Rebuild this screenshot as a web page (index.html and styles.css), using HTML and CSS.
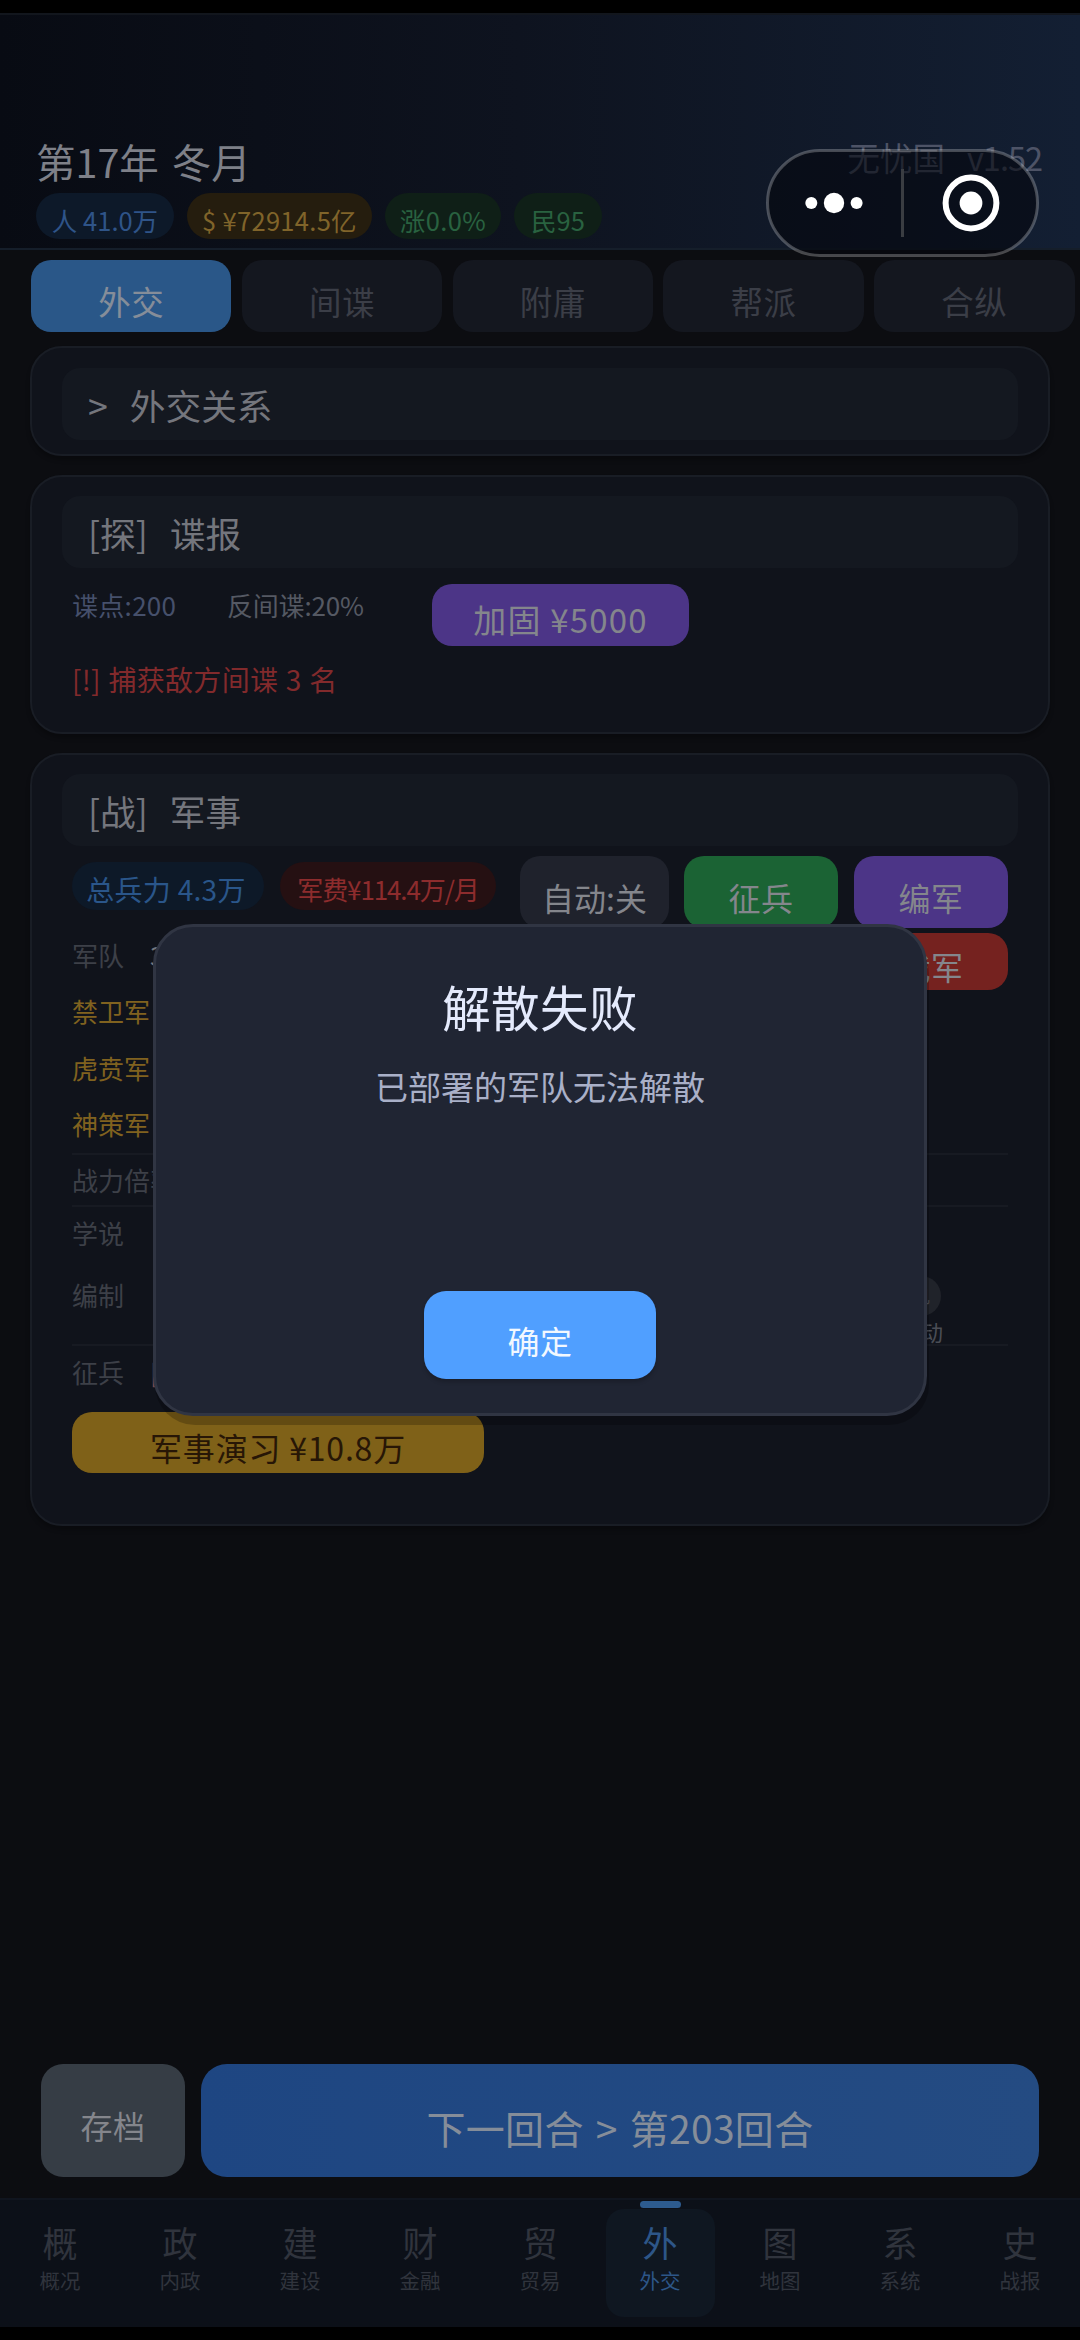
FILE: index.html
```
<!DOCTYPE html>
<html lang="zh-CN">
<head>
<meta charset="utf-8">
<title>无忧国</title>
<link rel="stylesheet" href="styles.css">
</head>
<body>
<div class="app">
  <header class="header">
    <div class="header-row">
      <h1 class="date">第17年 冬月</h1>
      <div class="version"><span>无忧国</span><span class="version-no">v1.52</span></div>
    </div>
    <div class="stats">
      <span class="pill pill-pop">人 41.0万</span>
      <span class="pill pill-gold">$ ¥72914.5亿</span>
      <span class="pill pill-rise">涨0.0%</span>
      <span class="pill pill-mood">民95</span>
    </div>
  </header>

  <nav class="tabs">
    <a class="tab active">外交</a>
    <a class="tab">间谍</a>
    <a class="tab">附庸</a>
    <a class="tab">帮派</a>
    <a class="tab">合纵</a>
  </nav>

  <main class="content">
    <section class="card card-relations">
      <h2 class="card-title"><span>&gt;</span><span>外交关系</span></h2>
    </section>

    <section class="card card-spy">
      <h2 class="card-title"><span>[探]</span><span>谍报</span></h2>
      <div class="spy-row">
        <span class="spy-points">谍点:200</span>
        <span class="spy-counter">反间谍:20%</span>
        <button class="btn btn-purple btn-fortify">加固 ¥5000</button>
      </div>
      <p class="alert">[!] 捕获敌方间谍 3 名</p>
    </section>

    <section class="card card-army">
      <h2 class="card-title"><span>[战]</span><span>军事</span></h2>
      <div class="army-actions">
        <span class="pill pill-force">总兵力 4.3万</span>
        <span class="pill pill-cost">军费¥114.4万/月</span>
        <button class="btn btn-grey btn-auto">自动:关</button>
        <button class="btn btn-green">征兵</button>
        <button class="btn btn-purple">编军</button>
      </div>
      <div class="army-count">
        <span class="label">军队</span><span class="value">3</span>
        <button class="btn btn-red btn-cut">裁军</button>
      </div>
      <div class="troops">
        <div class="troop">禁卫军</div>
        <div class="troop">虎贲军</div>
        <div class="troop">神策军</div>
      </div>
      <div class="line line-power"><span class="label">战力倍率</span></div>
      <div class="line line-doctrine"><span class="label">学说</span></div>
      <div class="formation">
        <span class="label">编制</span>
        <div class="unit"><span class="unit-icon">机</span><span class="unit-name">机动</span></div>
      </div>
      <div class="line line-draft"><span class="label">征兵</span><span class="value warn">[!]</span></div>
      <button class="btn btn-gold">军事演习 ¥10.8万</button>
    </section>
  </main>

  <div class="actions">
    <button class="btn btn-save">存档</button>
    <button class="btn btn-next">下一回合 &gt; 第203回合</button>
  </div>

  <nav class="bottom-nav">
    <a class="nav-item"><b>概</b><i>概况</i></a>
    <a class="nav-item"><b>政</b><i>内政</i></a>
    <a class="nav-item"><b>建</b><i>建设</i></a>
    <a class="nav-item"><b>财</b><i>金融</i></a>
    <a class="nav-item"><b>贸</b><i>贸易</i></a>
    <a class="nav-item active"><b>外</b><i>外交</i></a>
    <a class="nav-item"><b>图</b><i>地图</i></a>
    <a class="nav-item"><b>系</b><i>系统</i></a>
    <a class="nav-item"><b>史</b><i>战报</i></a>
  </nav>

  <div class="dialog" role="dialog">
    <h3 class="dialog-title">解散失败</h3>
    <p class="dialog-text">已部署的军队无法解散</p>
    <button class="btn dialog-ok">确定</button>
  </div>

  <div class="capsule">
    <svg width="273" height="108" viewBox="0 0 273 108">
      <rect x="1.5" y="1.5" width="270" height="105" rx="52.5" fill="#04060c" fill-opacity=".58" stroke="#fff" stroke-opacity=".25" stroke-width="3"/>
      <circle cx="45.3" cy="54" r="6" fill="#fff"/>
      <circle cx="68" cy="54" r="10.2" fill="#fff"/>
      <circle cx="90.6" cy="54" r="6" fill="#fff"/>
      <rect x="135" y="20" width="3" height="68" fill="#3a3d42"/>
      <circle cx="205" cy="54" r="25.4" fill="none" stroke="#fff" stroke-width="6"/>
      <circle cx="205" cy="54" r="11.4" fill="#fff"/>
    </svg>
  </div>
</div>
</body>
</html>
```
FILE: styles.css
```
* { box-sizing: border-box; }

body {
  margin: 0;
  background: #000;
  font-family: "Noto Sans CJK SC", "Noto Sans", sans-serif;
  font-weight: 400;
}

h1, h2, h3, p { margin: 0; font-weight: 400; }
b, i { font-weight: 400; font-style: normal; }

.app {
  position: relative;
  display: flex;
  flex-direction: column;
  width: 1080px;
  height: 2340px;
  padding: 13px 0;
  overflow: hidden;
  background: #0c0d11 content-box;
}

/* header */
.header {
  height: 237px;
  padding: 118px 38px 0 36px;
  background: linear-gradient(90deg, #080b13 0%, #0e131f 48%, #131f33 100%);
  border-top: 2px solid #12161d;
  border-bottom: 2px solid #151e2a;
  flex: none;
}
.header-row {
  display: flex;
  justify-content: space-between;
  height: 60px;
}
.date {
  font-size: 39.5px;
  line-height: 56px;
  word-spacing: 4px;
  color: #7e8088;
  white-space: pre;
}
.version {
  display: flex;
  gap: 22px;
  font-size: 32.5px;
  line-height: 48px;
  color: #4d5366;
}
.version-no { letter-spacing: -1px; }

.stats { display: flex; gap: 13px; }
.pill {
  display: flex;
  align-items: center;
  justify-content: center;
  height: 46px;
  padding-top: 7px;
  border-radius: 24px;
  font-size: 25.5px;
  line-height: 30px;
  white-space: pre;
}
.pill-pop { width: 138px; background: #0d1929; color: #2f5488; }
.pill-gold { width: 185px; background: #251d0e; color: #80642a; letter-spacing: .3px; }
.pill-rise { width: 116px; background: #0f1f17; color: #296240; letter-spacing: .4px; }
.pill-mood { width: 88px; background: #0f1f17; color: #296240; }

/* section tabs */
.tabs {
  display: flex;
  flex: none;
  gap: 10.4px;
  padding: 10px 0 0 31px;
  overflow: hidden;
}
.tab {
  flex: none;
  width: 200.4px;
  height: 72px;
  padding-top: 5px;
  border-radius: 20px;
  background: #14171f;
  color: #3b3e47;
  font-size: 32.5px;
  line-height: 72px;
  letter-spacing: .5px;
  text-align: center;
}
.tab.active { background: #2a5788; color: #858d99; }

/* cards */
.content {
  display: flex;
  flex-direction: column;
  gap: 19px;
  padding: 14px 30px 0;
}
.card {
  border: 2px solid #191d25;
  border-radius: 32px;
  background: #10131b;
  box-shadow: 0 4px 4px rgba(0, 0, 0, .25);
  padding: 19px 30px 0 40px;
}
.card-relations { height: 110px; padding-top: 20px; }
.card-spy { height: 259px; }
.card-army { height: 773px; }

.card-title {
  display: flex;
  gap: 22px;
  width: 956px;
  height: 72px;
  margin-left: -10px;
  padding-left: 26px;
  border-radius: 18px;
  background: #141820;
  color: #74767d;
  font-size: 35.7px;
  line-height: 74px;
}

.btn {
  border: 0;
  padding: 6px 0 0;
  border-radius: 20px;
  font-family: inherit;
  font-size: 32px;
  line-height: 40px;
  letter-spacing: .5px;
  text-align: center;
  white-space: pre;
  color: #84868c;
}
.btn-purple { background: #4c3587; }
.btn-grey { background: #1f222c; }
.btn-green { background: #1b6334; }
.btn-red { background: #75221f; }

.spy-row {
  display: flex;
  margin-top: 16px;
  height: 62px;
  font-size: 26px;
  line-height: 42px;
}
.spy-points { width: 155px; color: #46506b; letter-spacing: .3px; }
.spy-counter { width: 205px; color: #555963; letter-spacing: -.2px; }
.btn-fortify { width: 257px; font-size: 33px; letter-spacing: 1.2px; padding-top: 7px; }
.alert {
  margin-top: 13px;
  font-size: 28px;
  line-height: 40px;
  letter-spacing: .3px;
  word-spacing: 1px;
  color: #822a2c;
}

/* military card */
.army-actions {
  display: flex;
  align-items: center;
  height: 72px;
  margin-top: 10px;
}
.army-actions .btn { width: 154px; height: 72px; padding-top: 10px; }
.army-actions .btn + .btn { margin-left: 16px; }
.army-actions .btn-auto { width: 149px; margin-left: 24px; letter-spacing: 0; }
.army-actions .btn-auto + .btn { margin-left: 15px; }
.army-actions .pill { height: 48px; margin-top: -13px; }
.army-actions .pill-force { width: 192px; font-size: 28px; letter-spacing: .3px; padding-right: 4px; background: #0d1928; color: #2a568a; }
.army-actions .pill-cost { width: 216px; margin-left: 16px; font-size: 26px; letter-spacing: -1.1px; background: #251012; color: #8d2c2d; }

.army-count {
  display: flex;
  height: 57px;
  margin-top: 5px;
  font-size: 26px;
  line-height: 44px;
}
.label { flex: none; width: 78px; color: #3d4048; white-space: nowrap; }
.value { color: #74767d; }
.value.warn { color: #7c4a4c; }
.btn-cut { width: 154px; margin-left: auto; padding-top: 8px; }

.troops { margin-top: -7px; }
.troop {
  height: 56.5px;
  font-size: 26px;
  line-height: 56px;
  color: #80621f;
}
.line {
  display: flex;
  align-items: center;
  width: 936px;
  border-top: 2px solid #171a22;
  font-size: 26px;
}
.line-power { height: 52px; }
.line-doctrine { height: 53px; }
.line-draft { height: 54px; }

.formation {
  display: flex;
  justify-content: space-between;
  height: 86px;
  padding-top: 18px;
  font-size: 26px;
  line-height: 38px;
}
.unit {
  display: flex;
  flex-direction: column;
  align-items: center;
  width: 60px;
  margin-right: 57px;
}
.unit-icon {
  width: 40px;
  height: 40px;
  border-radius: 50%;
  background: #20232a;
  color: #55585f;
  font-size: 17px;
  line-height: 40px;
  text-align: center;
}
.unit-name { font-size: 22px; line-height: 30px; color: #4a4d55; }

.army-count, .formation, .army-actions { width: 936px; }

.btn-gold {
  display: block;
  width: 412px;
  height: 61px;
  margin-top: 14px;
  padding-top: 10px;
  letter-spacing: .8px;
  background: #7f6118;
  color: #271606;
}

/* turn actions */
.actions {
  display: flex;
  gap: 16px;
  height: 134px;
  margin-top: auto;
  padding: 0 41px 21px;
  flex: none;
}
.btn-save { width: 144px; border-radius: 22px; background: #363d45; padding-top: 9px; }
.btn-next {
  flex: 1;
  padding-top: 12px;
  border-radius: 26px;
  background: linear-gradient(90deg, #1e4682, #244b82);
  font-size: 39px;
  letter-spacing: .3px;
  word-spacing: 3px;
  color: #858d99;
}

/* bottom navigation */
.bottom-nav {
  display: flex;
  flex: none;
  height: 129px;
  border-top: 2px solid #10151f;
  background: #0c1018;
}
.nav-item {
  position: relative;
  display: flex;
  flex-direction: column;
  align-items: center;
  width: 109px;
  height: 108px;
  margin: 9px 5.5px 0;
  border-radius: 18px;
  color: #30343d;
}
.nav-item b { font-size: 35px; line-height: 66px; }
.nav-item i { font-size: 20.5px; line-height: 30px; margin-top: -10px; }
.nav-item.active { background: #0f1721; color: #2d5688; }
.nav-item.active::before {
  content: "";
  position: absolute;
  top: -8px;
  left: 34px;
  width: 41px;
  height: 7px;
  border-radius: 4px;
  background: #2d5b8e;
}

/* dialog */
.dialog {
  position: absolute;
  left: 153px;
  top: 924px;
  display: flex;
  flex-direction: column;
  align-items: center;
  width: 774px;
  height: 492px;
  padding-top: 43px;
  border: 3px solid #303543;
  border-radius: 40px;
  background: #202533;
  box-shadow: 2px 9px 0 rgba(0, 0, 0, .22);
}
.dialog-title { font-size: 48.5px; line-height: 72px; letter-spacing: .4px; color: #e4eafc; }
.dialog-text { margin-top: 19px; font-size: 33px; line-height: 50px; color: #a9b0c8; }
.dialog-ok {
  width: 232px;
  height: 88px;
  margin-top: 180px;
  padding-top: 9px;
  border-radius: 22px;
  background: #509fff;
  color: #f2f8ff;
  box-shadow: 0 3px 4px rgba(0, 0, 0, .2);
}

/* mini-program capsule */
.capsule { position: absolute; left: 766px; top: 149px; height: 108px; }
.capsule svg { display: block; }
```
